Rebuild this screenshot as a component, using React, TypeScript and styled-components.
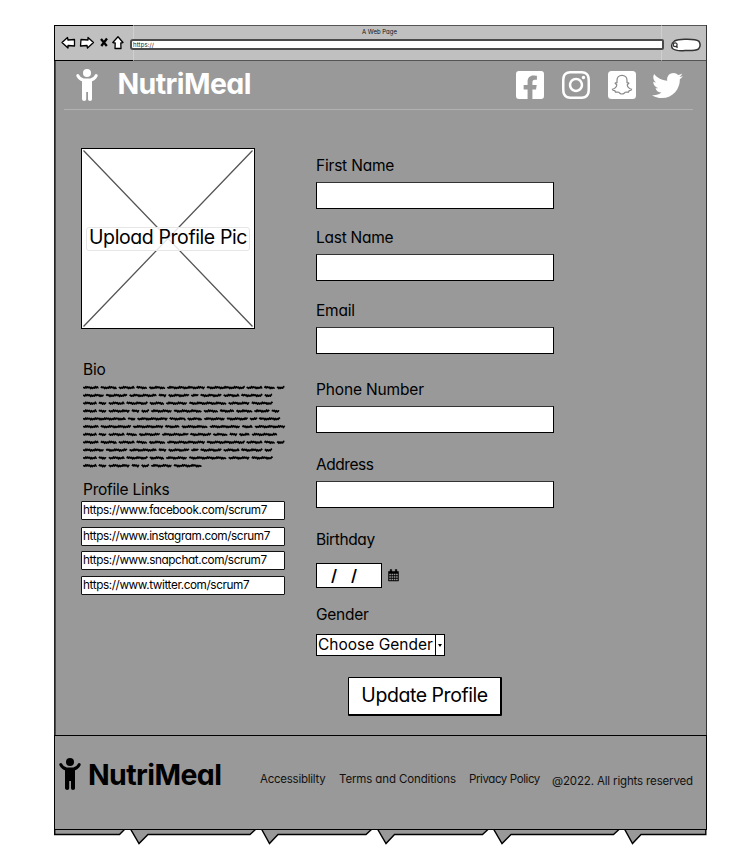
import React from 'react';
import styled, { createGlobalStyle } from 'styled-components';
import { FaFacebookSquare, FaInstagram, FaTwitter } from 'react-icons/fa';

const GlobalStyle = createGlobalStyle`
  * { box-sizing: border-box; }
  body {
    margin: 0;
    background: #fff;
    color: #000;
    font-family: "Inter", "Lato", sans-serif;
    font-feature-settings: "cv11";
  }
`;

const Page = styled.div`
  width: 745px;
  padding: 25px 38px 0 54px;
`;

const Chrome = styled.header`
  display: grid;
  grid-template-columns: 79px 529px 1fr;
  width: 653px;
  height: 36px;
  background: #c0c0c0;
  border-right: 1px solid #333;
`;

const Controls = styled.div`
  display: flex;
  border: 1px solid #000;
  border-right: none;
  padding: 8px 0 0 6px;
`;

const AddressArea = styled.div`
  border: solid #555;
  border-width: 1px 0 1px;
  border-left: 1px solid #d0d0d0;
  border-right: 1px solid #d0d0d0;
`;

const PageTitle = styled.div`
  margin-left: 228px;
  padding-top: 1px;
  height: 13px;
  font-size: 6px;
  line-height: 10px;
  color: #111;
`;

const AddressBar = styled.div`
  height: 11px;
  margin: 0 -3px 0 -4px;
  padding-left: 1px;
  background: #fff;
  border: 2px solid #4a4a4a;
  border-radius: 3px 2px 2px 3px;
  font-size: 6px;
  line-height: 7px;
  letter-spacing: 0.1px;
  color: #222;
`;

const SearchArea = styled.div`
  border: solid #555;
  border-width: 1px 0 1px;
  padding: 12px 0 0 8px;
`;

const Site = styled.main`
  width: 653px;
  height: 674px;
  background: #999;
  border-left: 1px solid #222;
  border-right: 1px solid #333;
  box-shadow: inset 1px 0 #4a4a4a;
`;

const SiteHeader = styled.div`
  display: flex;
  align-items: flex-start;
  width: 629px;
  height: 49px;
  margin-left: 9px;
  padding: 8px 10px 0 12px;
  border-bottom: 1px solid #b2b2b2;
  color: #fff;
`;

const Brand = styled.div<{ $tone: string; $gap: number; $spacing: number; $leading: number }>`
  display: flex;
  gap: ${(p) => p.$gap}px;
  color: ${(p) => p.$tone};
  font-size: 28.5px;
  font-weight: 700;
  line-height: ${(p) => p.$leading}px;
  letter-spacing: ${(p) => p.$spacing}px;
`;

const Socials = styled.div`
  display: flex;
  margin-left: auto;
  gap: 18px;
  align-items: center;
  height: 32px;

  > svg:nth-child(-n + 2) {
    width: 28px;
    height: 32px;
  }

  > svg:last-child {
    margin-left: -2px;
  }
`;

const Columns = styled.div`
  display: grid;
  grid-template-columns: 203px 238px;
  column-gap: 32px;
  padding-left: 26px;
`;

const LeftColumn = styled.div`
  display: flex;
  flex-direction: column;
  padding-top: 38px;
`;

const RightColumn = styled.div`
  display: flex;
  flex-direction: column;
  padding-top: 46px;
`;

const PictureBox = styled.div`
  display: grid;
  width: 174px;
  height: 181px;
  place-items: center;
  background: #fff;
  border: 1px solid #000;

  > * { grid-area: 1 / 1; }
`;

const UploadTag = styled.span`
  width: 164px;
  height: 24px;
  padding-left: 2px;
  background: rgba(255, 255, 255, 0.85);
  border: 1px solid #e6e6e6;
  border-radius: 3px;
  font-size: 19.5px;
  line-height: 19px;
  letter-spacing: -0.4px;
  white-space: nowrap;
  z-index: 1;
`;

const Label = styled.label<{ $spacing?: number }>`
  display: block;
  height: 20px;
  font-size: 15.5px;
  line-height: 20px;
  letter-spacing: ${(p) => p.$spacing ?? -0.25}px;
  white-space: nowrap;
`;

const BioBlock = styled.div`
  margin-top: 31px;
  padding-left: 2px;
`;

const LinksTitle = styled.div`
  margin-top: 10px;
  padding-left: 2px;
`;

const LinkBox = styled.div<{ $gap: number }>`
  width: 204px;
  height: 19px;
  margin-top: ${(p) => p.$gap}px;
  padding-left: 1px;
  background: #fff;
  border: 1px solid #111;
  border-radius: 1px;
  font-size: 11.75px;
  line-height: 17px;
  letter-spacing: -0.4px;
  white-space: nowrap;
`;

const Field = styled.div<{ $gap: number }>`
  margin-top: ${(p) => p.$gap}px;
`;

const TextBox = styled.div`
  width: 238px;
  height: 27px;
  margin-top: 6px;
  background: #fff;
  border: 1px solid #000;
  border-top-color: #333;
`;

const DateRow = styled.div`
  display: flex;
  align-items: center;
  gap: 6px;
  margin-top: 13px;
`;

const DateBox = styled.div`
  display: flex;
  gap: 14px;
  width: 66px;
  height: 25px;
  padding-left: 14px;
  background: #fff;
  border: 1px solid #000;
  font-size: 16px;
  font-weight: 600;
  line-height: 22px;
`;

const Select = styled.div`
  display: flex;
  width: 129px;
  height: 22px;
  margin-top: 9px;
  background: #fff;
  border: 1px solid #000;
  font-size: 15.5px;
  line-height: 19px;
`;

const SelectValue = styled.span`
  width: 119px;
  padding-left: 1px;
  border-right: 1px solid #000;
  white-space: nowrap;
`;

const SelectArrow = styled.span`
  width: 0;
  height: 0;
  margin: 9px 0 0 2px;
  border: 2px solid transparent;
  border-top: 3px solid #000;
  border-bottom: none;
`;

const SubmitButton = styled.button`
  width: 154px;
  height: 39px;
  margin: 21px 0 0 32px;
  padding: 0 0 2px;
  background: #fff;
  color: #000;
  border: solid #000;
  border-width: 1px 2px 2px 1px;
  border-radius: 1px;
  font-family: inherit;
  font-feature-settings: inherit;
  font-size: 19.5px;
  letter-spacing: -0.45px;
  white-space: nowrap;
`;

const Footer = styled.footer`
  display: flex;
  width: 653px;
  height: 95px;
  padding: 22px 0 0 4px;
  background: #999;
  border: 1px solid #000;
`;

const FooterLinks = styled.nav`
  display: flex;
  padding-top: 13px;
  margin-left: auto;
`;

const FooterText = styled.span<{ $width: number; $spacing: number; $drop?: number }>`
  width: ${(p) => p.$width}px;
  padding-top: ${(p) => p.$drop ?? 0}px;
  font-size: 11.5px;
  line-height: 16px;
  letter-spacing: ${(p) => p.$spacing}px;
  color: #111;
  white-space: nowrap;
`;

const Drawing = styled.svg`
  display: block;
  flex: none;
`;

const Child = () => (
  <Drawing width="22" height="32" viewBox="0 0 22 32" fill="currentColor">
    <circle cx="11" cy="4" r="4" />
    <path
      d="M1.8 6.6 Q3.5 10.4 7.5 11 H14.5 Q18.5 10.4 20.2 6.6"
      fill="none"
      stroke="currentColor"
      strokeWidth="3"
      strokeLinecap="round"
      strokeLinejoin="round"
    />
    <path d="M6 10 H16 V30.2 Q16 32 14 32 Q12 32 12 30.2 V23 H10.2 V30.2 Q10.2 32 8.2 32 Q6.2 32 6 30.2 Z" />
  </Drawing>
);

const NavIcons = () => (
  <Drawing width="66" height="18" viewBox="0 0 66 18" fill="#fff" stroke="#000" strokeWidth="1.3" strokeLinejoin="round">
    <path d="M1 8.5 L6.5 3.5 L7 6 L13.5 5.5 V12 L7 11.5 V14 Z" />
    <path d="M32.5 8.5 L27 3.5 V6 L20 5.5 L19.5 12 L26 11.5 L26.5 14 Z" />
    <path d="M40 5 L45.8 12 M46 4.5 L40.3 12" strokeWidth="2.3" />
    <path d="M57 2.8 L62 8.5 L59.8 9 L60 14.5 H54 L54.2 9 L51.8 8.5 Z" />
  </Drawing>
);

const SearchPill = () => (
  <Drawing width="32" height="15" viewBox="0 0 32 15" fill="none" stroke="#333" strokeWidth="1.5">
    <path d="M4.5 3 Q8 1 16 1.2 Q26 1 29 3.3 Q31.5 7.5 28.5 11 Q25 13 15 12.5 Q6 13.3 2.5 10.5 Q0 6.5 4.5 3 Z" fill="#fff" />
    <circle cx="5.2" cy="6.8" r="1.9" strokeWidth="1.2" />
    <path d="M6.2 8.2 L7.6 9.6" />
  </Drawing>
);

const Snapchat = () => (
  <Drawing width="28" height="28" viewBox="0 0 28 28">
    <rect width="28" height="28" rx="3.5" fill="#fff" />
    <path
      d="M14 4.3 C11 4.3 9 6.4 9 9.2 V11.7 C8.3 12 7.7 11.5 7.2 11.9 C6.8 12.7 8.6 13.1 8.8 14 C8.5 16 6.6 17.7 4.4 18.3 C4.3 19.3 5.8 19.5 6.9 19.8 L7.5 21.1 C8.5 21.3 9.6 20.8 10.7 21.3 C11.8 22 12.6 23 14 23 C15.4 23 16.2 22 17.3 21.3 C18.4 20.8 19.5 21.3 20.5 21.1 L21.1 19.8 C22.2 19.5 23.7 19.3 23.6 18.3 C21.4 17.7 19.5 16 19.2 14 C19.4 13.1 21.2 12.7 20.8 11.9 C20.3 11.5 19.7 12 19 11.7 V9.2 C19 6.4 17 4.3 14 4.3 Z"
      fill="none"
      stroke="#888"
      strokeWidth="1.2"
    />
  </Drawing>
);

const Calendar = () => (
  <Drawing width="11" height="13" viewBox="0 0 11 13">
    <path d="M0.5 2.5 H10.5 V12 H0.5 Z M2.2 0.5 H3.7 V3 H2.2 Z M7.3 0.5 H8.8 V3 H7.3 Z" fill="#000" stroke="#000" strokeWidth="0.5" />
    <path d="M1.3 5.4 H9.7 M1.3 8 H9.7 M1.3 10.5 H9.7" stroke="#999" strokeWidth="1.5" strokeDasharray="1.6 0.67" />
  </Drawing>
);

const CrossedBox = () => (
  <Drawing width="172" height="179" viewBox="0 0 172 179" stroke="#555" strokeWidth="1.3">
    <path d="M1.5 1.5 L170.5 177.5 M170.5 1.5 L1.5 177.5" />
  </Drawing>
);

// Word widths of each scribbled line, in thirds of a pixel.
const bioRows: number[][] = [
  [46, 46, 46, 30, 46, 112, 111, 46, 30, 20],
  [62, 62, 81, 21, 60, 21, 61, 46, 62, 20],
  [40, 22, 46, 62, 41, 62, 110, 62, 62],
  [40, 22, 62, 21, 21, 61, 82, 41, 41, 46, 45, 22],
  [128, 20, 89, 46, 42, 61, 61, 20, 62],
  [46, 89, 89, 42, 76, 90, 30, 89],
  [40, 22, 46, 30, 61, 77, 61, 42, 21, 30, 75],
  [46, 46, 46, 30, 46, 112, 111, 46, 30, 20],
  [62, 62, 81, 21, 60, 21, 61, 46, 62, 20],
  [40, 22, 46, 62, 41, 62, 110, 62, 62],
  [40, 22, 62, 21, 21, 61, 82],
];

const scribble = (words: number[], y: number): string => {
  let x = 0;
  let path = '';
  words.forEach((word, w) => {
    const end = x + word / 3;
    path += `M${x.toFixed(1)} ${(y + 0.4).toFixed(1)}`;
    for (let step = 0, px = x + 0.9; px < end; px += 0.95, step += 1) {
      const lift = 0.2 + ((step * 7 + w * 3) % 5) / 4.5;
      path += `L${px.toFixed(1)} ${(y + (step % 2 ? lift : -lift)).toFixed(1)}`;
    }
    path += `L${end.toFixed(1)} ${y.toFixed(1)}`;
    x += (word + 7.7) / 3;
  });
  return path;
};

const BioText = () => (
  <Drawing width="203" height="90" viewBox="0 0 203 90" fill="none" stroke="#000" strokeWidth="1.5" strokeLinejoin="round">
    {bioRows.map((words, row) => (
      <path key={row} d={scribble(words, 7.6 + row * 7.81)} />
    ))}
  </Drawing>
);

const TornEdge = () => (
  <Drawing width="653" height="17" viewBox="0 0 653 17" fill="#999" stroke="#000" strokeWidth="1.4">
    <path d="M0.7 -1 V4.5 H65.5 L71 -1" />
    <path d="M76.5 -1 L85 13.5 L94 4.5 H196 L202 -1" />
    <path d="M207.5 -1 L215.5 13.5 L224 4.5 H312 L318 -1" />
    <path d="M323.5 -1 L332 13.5 L340.5 4.5 H428.5 L434.5 -1" />
    <path d="M439.5 -1 L448 13.5 L457 4.5 H559.5 L565.5 -1" />
    <path d="M570.5 -1 L578.5 13.5 L587 4.5 H651.8 V-1" />
  </Drawing>
);

const links = [
  { url: 'https://www.facebook.com/scrum7', gap: 1 },
  { url: 'https://www.instagram.com/scrum7', gap: 7 },
  { url: 'https://www.snapchat.com/scrum7', gap: 5 },
  { url: 'https://www.twitter.com/scrum7', gap: 6 },
];

const textFields = [
  { label: 'First Name', gap: 0, spacing: -0.2 },
  { label: 'Last Name', gap: 19, spacing: -0.25 },
  { label: 'Email', gap: 20, spacing: -0.2 },
  { label: 'Phone Number', gap: 26, spacing: -0.15 },
  { label: 'Address', gap: 22, spacing: -0.45 },
];

export default function App() {
  return (
    <Page>
      <GlobalStyle />
      <Chrome>
        <Controls>
          <NavIcons />
        </Controls>
        <AddressArea>
          <PageTitle>A Web Page</PageTitle>
          <AddressBar>https://</AddressBar>
        </AddressArea>
        <SearchArea>
          <SearchPill />
        </SearchArea>
      </Chrome>

      <Site>
        <SiteHeader>
          <Brand $tone="#fff" $gap={19.5} $spacing={-0.6} $leading={30}>
            <Child />
            NutriMeal
          </Brand>
          <Socials>
            <FaFacebookSquare />
            <FaInstagram />
            <Snapchat />
            <FaTwitter size={31} />
          </Socials>
        </SiteHeader>

        <Columns>
          <LeftColumn>
            <PictureBox>
              <CrossedBox />
              <UploadTag>Upload Profile Pic</UploadTag>
            </PictureBox>
            <BioBlock>
              <Label>Bio</Label>
              <BioText />
            </BioBlock>
            <LinksTitle>
              <Label>Profile Links</Label>
            </LinksTitle>
            {links.map((link) => (
              <LinkBox key={link.url} $gap={link.gap}>
                {link.url}
              </LinkBox>
            ))}
          </LeftColumn>

          <RightColumn>
            {textFields.map((field) => (
              <Field key={field.label} $gap={field.gap}>
                <Label $spacing={field.spacing}>{field.label}</Label>
                <TextBox />
              </Field>
            ))}
            <Field $gap={22}>
              <Label $spacing={-0.4}>Birthday</Label>
              <DateRow>
                <DateBox>
                  <span>/</span>
                  <span>/</span>
                </DateBox>
                <Calendar />
              </DateRow>
            </Field>
            <Field $gap={17}>
              <Label>Gender</Label>
              <Select>
                <SelectValue>Choose Gender</SelectValue>
                <SelectArrow />
              </Select>
            </Field>
            <SubmitButton>Update Profile</SubmitButton>
          </RightColumn>
        </Columns>
      </Site>

      <Footer>
        <Brand $tone="#000" $gap={7} $spacing={-0.6} $leading={33}>
          <Child />
          NutriMeal
        </Brand>
        <FooterLinks>
          <FooterText $width={79} $spacing={-0.25}>Accessiblilty</FooterText>
          <FooterText $width={130} $spacing={-0.13}>Terms and Conditions</FooterText>
          <FooterText $width={83} $spacing={-0.4}>Privacy Policy</FooterText>
          <FooterText $width={154} $spacing={-0.15} $drop={2}>@2022. All rights reserved</FooterText>
        </FooterLinks>
      </Footer>
      <TornEdge />
    </Page>
  );
}
